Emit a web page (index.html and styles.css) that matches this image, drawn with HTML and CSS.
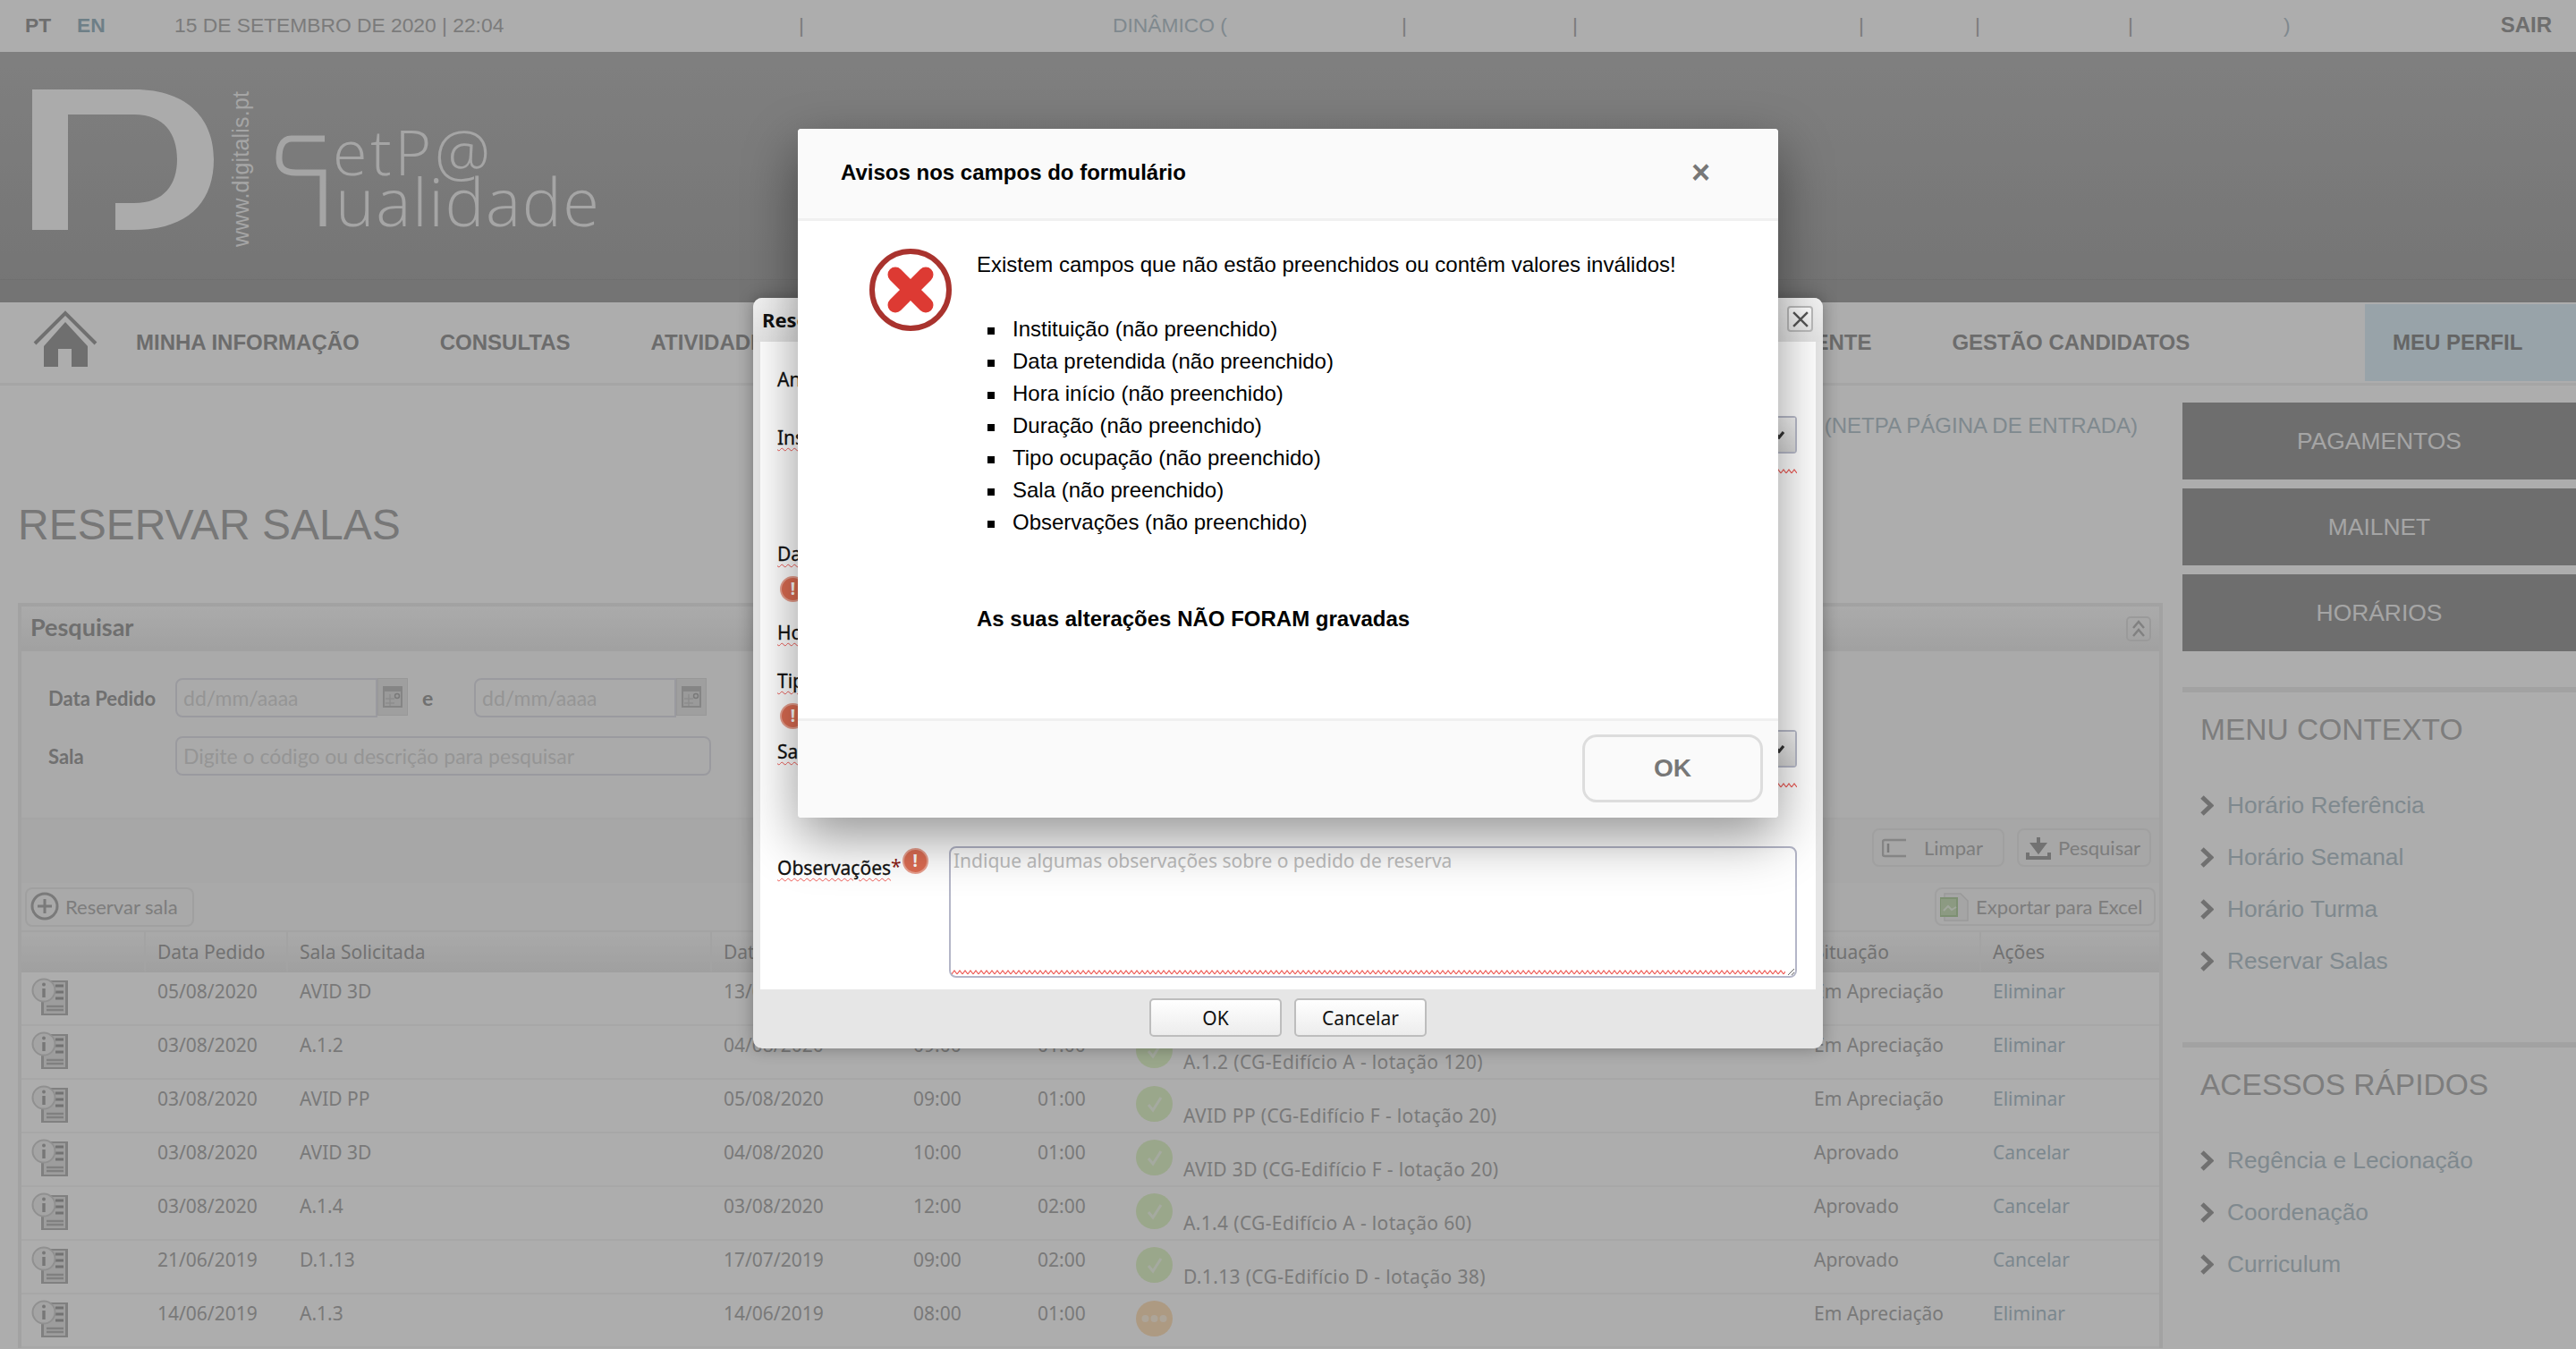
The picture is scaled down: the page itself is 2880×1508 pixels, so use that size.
FILE: index.html
```html
<!DOCTYPE html>
<html lang="pt">
<head>
    <meta charset="UTF-8">
    <meta name="viewport" content="width=device-width, initial-scale=1.0">
    <title>Reservar Salas</title>
    <link rel="stylesheet" href="styles.css">
</head>
<body>
    <!-- shared icons -->
    <svg class="icon-defs" aria-hidden="true">
        <defs>
            <symbol id="i-info" viewBox="0 0 41 42">
                <rect x="11" y="3" width="30" height="39" fill="#bdbdbd"/>
                <rect x="14" y="5" width="24" height="35" fill="#e8e8e8"/>
                <path d="M27 9h9M27 16h9M27 23h9" stroke="#a8a8a8" stroke-width="3"/>
                <path d="M17 32h19M17 36h19" stroke="#bdbdbd" stroke-width="2.5"/>
                <circle cx="14" cy="14" r="12.5" fill="#f2f2f2" stroke="#d4d4d4" stroke-width="2"/>
                <path d="M14 12v10" stroke="#b0b0b0" stroke-width="3.5"/>
                <circle cx="14" cy="7.5" r="2" fill="#b0b0b0"/>
            </symbol>
            <symbol id="i-check" viewBox="0 0 41 40">
                <ellipse cx="20.5" cy="20" rx="20.5" ry="20" fill="#e4f6cd"/>
                <path d="M14 21l5 6 9-14" fill="none" stroke="#f4fbec" stroke-width="3"/>
            </symbol>
            <symbol id="i-wait" viewBox="0 0 41 40">
                <ellipse cx="20.5" cy="20" rx="20.5" ry="20" fill="#ffe3c0"/>
                <circle cx="10.5" cy="20" r="4" fill="#fff3e2"/>
                <circle cx="20.5" cy="20" r="4" fill="#fff3e2"/>
                <circle cx="30.5" cy="20" r="4" fill="#fff3e2"/>
            </symbol>
            <symbol id="i-chev" viewBox="0 0 15 23">
                <path d="M2 2l10 9.5L2 21" fill="none" stroke="#a6a6a6" stroke-width="5"/>
            </symbol>
            <symbol id="i-cal" viewBox="0 0 22 24">
                <rect x="1" y="1" width="20" height="22" fill="#e4e4e4" stroke="#c4c4c4" stroke-width="2"/>
                <rect x="1" y="1" width="20" height="5" fill="#c4c4c4"/>
                <path d="M3 14h10M3 19h10M8 9v13" stroke="#cfcfcf" stroke-width="1.5"/>
                <circle cx="16" cy="11" r="2.5" fill="none" stroke="#b4b4b4" stroke-width="1.5"/>
            </symbol>
            <pattern id="wave" width="6" height="6" patternUnits="userSpaceOnUse">
                <path d="M0 5L3 1L6 5" fill="none" stroke="#ee5a55" stroke-width="1.2"/>
            </pattern>
        </defs>
    </svg>

    <div class="topbar">
        <a class="lang-on">PT</a>
        <a class="lang-off">EN</a>
        <span class="date">15 DE SETEMBRO DE 2020 | 22:04</span>
        <span class="sep">|</span>
        <span class="dyn">DINÂMICO (</span>
        <span class="sep">|</span>
        <span class="sep">|</span>
        <span class="sep">|</span>
        <span class="sep">|</span>
        <span class="sep">|</span>
        <span class="dyn">)</span>
        <a class="logout">SAIR</a>
    </div>

    <header class="banner">
        <svg class="logo" viewBox="0 58 700 280" width="700" height="280">
            <path class="logo-shape" d="M36 100H150C212 100 239 135 239 178C239 228 208 257 150 257H129V227H150C184 227 198 206 198 178C198 150 184 128 150 128H76V257H36Z"/>
            <text class="logo-url" transform="translate(278 276) rotate(-90)" textLength="174">www.digitalis.pt</text>
            <path class="logo-q" d="M363 155H326C314 155 312 168 312 177C312 188 318 193 331 193H361V253"/>
            <text class="logo-net" x="372" y="196" textLength="176">etP@</text>
            <text class="logo-qual" x="375" y="253" textLength="295">ualidade</text>
        </svg>
    </header>

    <nav class="mainnav">
        <a class="home">
            <svg viewBox="0 0 72 63" width="72" height="63">
                <path d="M2 37L36 3L70 37" fill="none" stroke="#a6a6a6" stroke-width="4"/>
                <path d="M12 40L36 13L61 40V63H43V43H28V63H12Z" fill="#a4a4a4"/>
            </svg>
        </a>
        <a>MINHA INFORMAÇÃO</a>
        <a>CONSULTAS</a>
        <a>ATIVIDADE</a>
        <a class="nav-docente">DOCENTE</a>
        <a>GESTÃO CANDIDATOS</a>
        <a class="profile">MEU PERFIL</a>
    </nav>

    <main class="layout">
        <section class="content">
            <p class="crumb">(NETPA PÁGINA DE ENTRADA)</p>
            <h1>RESERVAR SALAS</h1>

            <div class="panel">
                <div class="panel-head">
                    <span>Pesquisar</span>
                    <a class="collapse">
                        <svg viewBox="0 0 18 24" width="18" height="24"><path d="M3 11l6-7 6 7M3 20l6-7 6 7" fill="none" stroke="#bfbfbf" stroke-width="2.5"/></svg>
                    </a>
                </div>
                <form class="search-form">
                    <label>Data Pedido</label>
                    <div class="date-row">
                        <div class="date-field">
                            <input type="text" placeholder="dd/mm/aaaa">
                            <span class="cal"><svg width="22" height="24"><use href="#i-cal"/></svg></span>
                        </div>
                        <span class="and">e</span>
                        <div class="date-field">
                            <input type="text" placeholder="dd/mm/aaaa">
                            <span class="cal"><svg width="22" height="24"><use href="#i-cal"/></svg></span>
                        </div>
                    </div>
                    <label>Sala</label>
                    <input class="room-input" type="text" placeholder="Digite o código ou descrição para pesquisar">
                </form>
                <div class="search-actions">
                    <a class="tool-btn btn-clear">
                        <svg viewBox="0 0 28 22" width="28" height="22"><path d="M27 2H3a2 2 0 0 0-2 2v14a2 2 0 0 0 2 2h24" fill="none" stroke="#c4c4c4" stroke-width="2.5"/><path d="M7 6v10" stroke="#b4b4b4" stroke-width="2.5"/></svg>
                        Limpar
                    </a>
                    <a class="tool-btn btn-search">
                        <svg viewBox="0 0 28 26" width="28" height="26"><path d="M14 1v12M8 9h12l-6 8z" fill="#a8a8a8" stroke="#a8a8a8" stroke-width="4"/><path d="M2 18v6h24v-6" fill="none" stroke="#a8a8a8" stroke-width="4"/></svg>
                        Pesquisar
                    </a>
                </div>
                <div class="table-tools">
                    <a class="tool-btn btn-add">
                        <svg viewBox="0 0 32 32" width="32" height="32"><circle cx="16" cy="16" r="14" fill="none" stroke="#b4b4b4" stroke-width="3"/><path d="M16 8v16M8 16h16" stroke="#b4b4b4" stroke-width="3"/></svg>
                        Reservar sala
                    </a>
                    <a class="tool-btn btn-excel">
                        <svg viewBox="0 0 32 32" width="32" height="32"><path d="M5 1h18l8 8v22H5z" fill="#f4f4f4" stroke="#e2e2e2" stroke-width="1.5"/><rect x="0" y="6" width="19" height="20" fill="#cfe3c0" stroke="#b9d5a8" stroke-width="2"/><path d="M4 20l5-5 4 4 5-3" fill="none" stroke="#eef6e8" stroke-width="2"/></svg>
                        Exportar para Excel
                    </a>
                </div>
                <table class="results">
                    <colgroup>
                        <col class="c-icon"><col class="c-date"><col class="c-room"><col class="c-day">
                        <col class="c-hour"><col class="c-dur"><col class="c-desc"><col class="c-state"><col class="c-act">
                    </colgroup>
                    <thead>
                        <tr><th></th><th>Data Pedido</th><th>Sala Solicitada</th><th>Data</th><th>Hora</th><th>Duração</th><th>Sala</th><th>Situação</th><th>Ações</th></tr>
                    </thead>
                    <tbody>
                        <tr>
                            <td class="td-icon"><svg width="41" height="42"><use href="#i-info"/></svg></td>
                            <td>05/08/2020</td><td>AVID 3D</td><td>13/08/2020</td><td>09:00</td><td>01:00</td>
                            <td class="td-status"><div class="status"><svg width="41" height="40"><use href="#i-check"/></svg><span>AVID 3D (CG-Edifício F - lotação 20)</span></div></td>
                            <td>Em Apreciação</td><td><a>Eliminar</a></td>
                        </tr>
                        <tr>
                            <td class="td-icon"><svg width="41" height="42"><use href="#i-info"/></svg></td>
                            <td>03/08/2020</td><td>A.1.2</td><td>04/08/2020</td><td>09:00</td><td>01:00</td>
                            <td class="td-status"><div class="status"><svg width="41" height="40"><use href="#i-check"/></svg><span>A.1.2 (CG-Edifício A - lotação 120)</span></div></td>
                            <td>Em Apreciação</td><td><a>Eliminar</a></td>
                        </tr>
                        <tr>
                            <td class="td-icon"><svg width="41" height="42"><use href="#i-info"/></svg></td>
                            <td>03/08/2020</td><td>AVID PP</td><td>05/08/2020</td><td>09:00</td><td>01:00</td>
                            <td class="td-status"><div class="status"><svg width="41" height="40"><use href="#i-check"/></svg><span>AVID PP (CG-Edifício F - lotação 20)</span></div></td>
                            <td>Em Apreciação</td><td><a>Eliminar</a></td>
                        </tr>
                        <tr>
                            <td class="td-icon"><svg width="41" height="42"><use href="#i-info"/></svg></td>
                            <td>03/08/2020</td><td>AVID 3D</td><td>04/08/2020</td><td>10:00</td><td>01:00</td>
                            <td class="td-status"><div class="status"><svg width="41" height="40"><use href="#i-check"/></svg><span>AVID 3D (CG-Edifício F - lotação 20)</span></div></td>
                            <td>Aprovado</td><td><a>Cancelar</a></td>
                        </tr>
                        <tr>
                            <td class="td-icon"><svg width="41" height="42"><use href="#i-info"/></svg></td>
                            <td>03/08/2020</td><td>A.1.4</td><td>03/08/2020</td><td>12:00</td><td>02:00</td>
                            <td class="td-status"><div class="status"><svg width="41" height="40"><use href="#i-check"/></svg><span>A.1.4 (CG-Edifício A - lotação 60)</span></div></td>
                            <td>Aprovado</td><td><a>Cancelar</a></td>
                        </tr>
                        <tr>
                            <td class="td-icon"><svg width="41" height="42"><use href="#i-info"/></svg></td>
                            <td>21/06/2019</td><td>D.1.13</td><td>17/07/2019</td><td>09:00</td><td>02:00</td>
                            <td class="td-status"><div class="status"><svg width="41" height="40"><use href="#i-check"/></svg><span>D.1.13 (CG-Edifício D - lotação 38)</span></div></td>
                            <td>Aprovado</td><td><a>Cancelar</a></td>
                        </tr>
                        <tr>
                            <td class="td-icon"><svg width="41" height="42"><use href="#i-info"/></svg></td>
                            <td>14/06/2019</td><td>A.1.3</td><td>14/06/2019</td><td>08:00</td><td>01:00</td>
                            <td class="td-status"><div class="status"><svg width="41" height="40"><use href="#i-wait"/></svg></div></td>
                            <td>Em Apreciação</td><td><a>Eliminar</a></td>
                        </tr>
                    </tbody>
                </table>
            </div>
        </section>

        <aside class="sidebar">
            <a class="side-btn">PAGAMENTOS</a>
            <a class="side-btn">MAILNET</a>
            <a class="side-btn">HORÁRIOS</a>
            <div class="side-box side-box-first">
                <h2>MENU CONTEXTO</h2>
                <a><svg width="15" height="23"><use href="#i-chev"/></svg>Horário Referência</a>
                <a><svg width="15" height="23"><use href="#i-chev"/></svg>Horário Semanal</a>
                <a><svg width="15" height="23"><use href="#i-chev"/></svg>Horário Turma</a>
                <a><svg width="15" height="23"><use href="#i-chev"/></svg>Reservar Salas</a>
            </div>
            <div class="side-box">
                <h2>ACESSOS RÁPIDOS</h2>
                <a><svg width="15" height="23"><use href="#i-chev"/></svg>Regência e Lecionação</a>
                <a><svg width="15" height="23"><use href="#i-chev"/></svg>Coordenação</a>
                <a><svg width="15" height="23"><use href="#i-chev"/></svg>Curriculum</a>
            </div>
        </aside>
    </main>

    <div class="overlay"></div>

    <!-- reservation form dialog -->
    <div class="res-dialog">
        <div class="res-title">
            <span>Reservar sala</span>
            <a class="res-close">
                <svg viewBox="0 0 16 16" width="18" height="18"><path d="M1 1l14 14M15 1L1 15" stroke="#555" stroke-width="2.2"/></svg>
            </a>
        </div>
        <div class="res-body">
            <div class="res-row"><span class="res-label plain">Ano letivo</span></div>
            <div class="res-row">
                <span class="res-label">Instituição*</span>
                <div class="res-field">
                    <div class="fake-select"><span class="arrow"><svg viewBox="0 0 12 10" width="12" height="10"><path d="M1 2l5 6 5-6" fill="none" stroke="#333" stroke-width="3.2"/></svg></span></div>
                    <svg class="squiggle" width="100%" height="6"><rect width="100%" height="6" fill="url(#wave)"/></svg>
                </div>
            </div>
            <div class="res-row res-stack"><span class="res-label">Data pretendida*</span><span class="err">!</span></div>
            <div class="res-row"><span class="res-label">Hora início*</span></div>
            <div class="res-row res-stack"><span class="res-label">Tipo ocupação*</span><span class="err">!</span></div>
            <div class="res-row">
                <span class="res-label">Sala*</span>
                <div class="res-field">
                    <div class="fake-select"><span class="arrow"><svg viewBox="0 0 12 10" width="12" height="10"><path d="M1 2l5 6 5-6" fill="none" stroke="#333" stroke-width="3.2"/></svg></span></div>
                    <svg class="squiggle" width="100%" height="6"><rect width="100%" height="6" fill="url(#wave)"/></svg>
                </div>
            </div>
            <div class="res-row">
                <div class="obs-label"><span class="res-label">Observações</span><em>*</em><span class="err">!</span></div>
                <div class="obs-field">
                    <textarea placeholder="Indique algumas observações sobre o pedido de reserva"></textarea>
                    <svg class="obs-wave" width="100%" height="6"><rect width="100%" height="6" fill="url(#wave)"/></svg>
                </div>
            </div>
        </div>
        <div class="res-foot">
            <button type="button">OK</button>
            <button type="button">Cancelar</button>
        </div>
    </div>

    <!-- warning dialog -->
    <div class="warn-dialog">
        <div class="warn-head">
            <h3>Avisos nos campos do formulário</h3>
            <span class="warn-close">×</span>
        </div>
        <div class="warn-body">
            <svg class="warn-icon" viewBox="0 0 92 92" width="92" height="92">
                <circle cx="46" cy="46" r="43" fill="#fff" stroke="#a9332e" stroke-width="6"/>
                <path d="M29 29L63 63M63 29L29 63" stroke="#dd3a33" stroke-width="17" stroke-linecap="round"/>
            </svg>
            <div class="warn-text">
                <p>Existem campos que não estão preenchidos ou contêm valores inválidos!</p>
                <ul>
                    <li>Instituição (não preenchido)</li>
                    <li>Data pretendida (não preenchido)</li>
                    <li>Hora início (não preenchido)</li>
                    <li>Duração (não preenchido)</li>
                    <li>Tipo ocupação (não preenchido)</li>
                    <li>Sala (não preenchido)</li>
                    <li>Observações (não preenchido)</li>
                </ul>
                <p class="warn-strong">As suas alterações NÃO FORAM gravadas</p>
            </div>
        </div>
        <div class="warn-foot">
            <button type="button">OK</button>
        </div>
    </div>
</body>
</html>
```

FILE: styles.css
```css
* {
    box-sizing: border-box;
}
body {
    position: relative;
    margin: 0;
    width: 2880px;
    height: 1508px;
    overflow: hidden;
    background: #fff;
    font-family: "Liberation Sans", Arial, sans-serif;
}
a {
    text-decoration: none;
    color: inherit;
}
.icon-defs {
    position: absolute;
    width: 0;
    height: 0;
}

/* top bar */
.topbar {
    display: grid;
    grid-template-columns: 58px 109px 698px 351px 323px 191px 320px 130px 171px 174px 1fr auto;
    align-items: center;
    height: 58px;
    padding: 0 27px 2px 28px;
    font-size: 22.8px;
    color: #b6b6b6;
}
.lang-on {
    font-weight: bold;
    color: #a2a2a2;
}
.lang-off {
    font-weight: bold;
    color: #a3bcc8;
}
.dyn {
    color: #bccad2;
}
.logout {
    font-size: 24px;
    font-weight: bold;
    color: #a2a2a2;
}

/* banner */
.banner {
    height: 280px;
    background: linear-gradient(#bcbcbc, #acacac);
    box-shadow: inset 0 -25px 0 #ababab, inset 0 -26px 0 #a6a6a6;
}
.logo {
    display: block;
}
.logo-shape {
    fill: #fdfdfd;
}
.logo-url {
    font-family: "Liberation Sans", Arial, sans-serif;
    font-size: 25px;
    fill: #f4f4f4;
}
.logo-q {
    fill: none;
    stroke: #f4f4f4;
    stroke-width: 7;
}
.logo-net, .logo-qual {
    font-family: "Open Sans", sans-serif;
    font-weight: 300;
    fill: #f4f4f4;
}
.logo-net {
    font-size: 70px;
}
.logo-qual {
    font-size: 74px;
}

/* main navigation */
.mainnav {
    display: flex;
    align-items: center;
    gap: 90px;
    height: 93px;
    padding-left: 152px;
    border-bottom: 3px solid #f3f3f3;
    position: relative;
    font-size: 24px;
    font-weight: bold;
    color: #9f9f9f;
}
.home {
    display: flex;
    margin: -10px -47px 0 -115px;
}
.nav-docente {
    margin-left: 1030px;
}
.profile {
    display: flex;
    align-items: center;
    align-self: flex-start;
    margin: 2px 0 0 auto;
    width: 236px;
    height: 86px;
    padding-left: 31px;
    background: #e0f1f9;
    color: #969696;
}

/* page layout */
.layout {
    display: flex;
    gap: 22px;
}
.content {
    width: 2418px;
    padding: 30px 0 0 20px;
}
.crumb {
    margin: 0 28px 0 0;
    text-align: right;
    font-size: 24px;
    line-height: 30px;
    color: #bbcad2;
}
h1 {
    margin: 68px 0 59px;
    font-size: 48px;
    font-weight: normal;
    line-height: 56px;
    color: #b0b0b0;
}

/* search panel */
.panel {
    border: 4px solid #efefef;
    border-bottom: 0;
    font-family: Lato, sans-serif;
}
.panel-head {
    display: flex;
    align-items: center;
    justify-content: space-between;
    height: 50px;
    padding: 0 9px 5px 10px;
    background: linear-gradient(#fcfcfc, #ededed);
    font-size: 27px;
    font-weight: bold;
    color: #a4a4a4;
}
.collapse {
    display: flex;
    align-items: center;
    justify-content: center;
    width: 28px;
    height: 28px;
    margin-top: 5px;
    border: 2px solid #e4e4e4;
    border-radius: 5px;
}
.search-form {
    display: grid;
    grid-template-columns: 142px 1fr;
    row-gap: 21px;
    align-items: center;
    height: 188px;
    align-content: start;
    padding: 30px 0 0 30px;
    background: #fbfbfb;
    border-bottom: 2px solid #f3f3f3;
}
.search-form label {
    font-size: 22px;
    font-weight: bold;
    color: #a6a6a6;
}
.date-row {
    display: flex;
    align-items: center;
}
.date-field {
    display: flex;
    align-items: flex-start;
}
input, textarea {
    font-family: inherit;
    outline: none;
}
.search-form input {
    height: 44px;
    padding: 0 7px;
    border: 2px solid #e4e4ea;
    border-radius: 8px;
    background: #fbfbfb;
    font-size: 23px;
}
.search-form input::placeholder {
    color: #dcdcdc;
}
.date-field input {
    width: 226px;
    border-radius: 8px 0 0 8px;
}
.cal {
    display: flex;
    align-items: center;
    justify-content: center;
    width: 34px;
    height: 42px;
    background: #eaeaea;
    border: 1px solid #e0e0e0;
}
.and {
    width: 74px;
    padding-left: 16px;
    font-size: 23px;
    font-weight: bold;
    color: #a6a6a6;
}
.room-input {
    width: 599px;
}
.search-actions {
    display: flex;
    justify-content: flex-end;
    gap: 14px;
    height: 71px;
    padding: 10px 9px 0 0;
    background: #f6f6f6;
}
.tool-btn {
    display: flex;
    align-items: center;
    height: 43px;
    border: 2px solid #ececec;
    border-radius: 8px;
    font-family: Lato, sans-serif;
    font-size: 22px;
    color: #b8b8b8;
}
.btn-clear {
    width: 148px;
    padding-left: 9px;
    gap: 19px;
}
.btn-search {
    width: 150px;
    padding-left: 8px;
    gap: 8px;
}
.table-tools {
    display: flex;
    justify-content: space-between;
    height: 53px;
    padding: 5px 4px 0 4px;
    background: #f9f9f9;
}
.btn-add {
    width: 189px;
    padding: 0 0 2px 4px;
    gap: 7px;
    height: 44px;
}
.btn-excel {
    width: 247px;
    padding-left: 4px;
    gap: 8px;
}

/* results table */
.results {
    width: 2390px;
    table-layout: fixed;
    border-collapse: separate;
    border-spacing: 0;
    font-family: "Noto Sans", sans-serif;
    font-size: 21px;
    color: #b3b3b3;
}
.c-icon { width: 139px; }
.c-date { width: 159px; }
.c-room { width: 474px; }
.c-day { width: 212px; }
.c-hour { width: 139px; }
.c-dur { width: 111px; }
.c-desc { width: 757px; }
.c-state { width: 200px; }
.c-act { width: 199px; }
.results th {
    height: 47px;
    padding: 0 0 0 13px;
    background: linear-gradient(#fafafa, #ececec);
    border-top: 2px solid #f0f0f0;
    border-bottom: 2px solid #ececec;
    border-right: 2px solid #f0f0f0;
    text-align: left;
    font-weight: normal;
    color: #a8a8a8;
}
.results th:last-child {
    border-right: 0;
}
.results td {
    height: 60px;
    padding: 8px 0 0 13px;
    vertical-align: top;
    line-height: 26px;
    border-bottom: 2px solid #f6f6f6;
    white-space: nowrap;
}
.results td a {
    color: #b6c8d2;
}
.results .td-icon {
    padding: 6px 0 0 11px;
}
.td-icon svg {
    display: block;
}
.results .td-status {
    padding: 7px 0 0 12px;
}
.status {
    display: flex;
    align-items: flex-end;
    gap: 12px;
}
.status svg {
    flex-shrink: 0;
    margin-bottom: 6px;
}
.status span {
    letter-spacing: 0.35px;
}

/* sidebar */
.sidebar {
    display: flex;
    flex-direction: column;
    width: 440px;
    padding-top: 19px;
}
.side-btn {
    display: flex;
    align-items: center;
    justify-content: center;
    height: 86px;
    margin-bottom: 10px;
    background: #a2a2a2;
    font-size: 26.4px;
    color: #f4f4f4;
}
.side-box {
    display: flex;
    flex-direction: column;
    gap: 28px;
    height: 397px;
    padding: 22px 0 0 20px;
    border-top: 6px solid #efefef;
}
.side-box-first {
    margin-top: 30px;
}
.side-box h2 {
    margin: 0 0 21px;
    font-size: 33.5px;
    font-weight: normal;
    line-height: 40px;
    color: #b8b8b8;
}
.side-box a {
    display: flex;
    align-items: center;
    gap: 15px;
    height: 30px;
    font-size: 26.3px;
    color: #bbcad2;
}

/* overlay and dialogs */
.overlay {
    position: absolute;
    inset: 0;
    background: rgba(0, 0, 0, 0.32);
}
.res-dialog {
    position: absolute;
    left: 842px;
    top: 333px;
    width: 1196px;
    height: 839px;
    padding: 0 8px;
    background: #e6e6e6;
    border-radius: 10px;
    box-shadow: 0 0 18px rgba(0, 0, 0, 0.3);
    font-family: "Noto Sans", sans-serif;
    color: #111;
}
.res-title {
    display: flex;
    align-items: center;
    justify-content: space-between;
    height: 49px;
    margin: 0 -8px;
    padding: 0 11px 2px 10px;
    border-radius: 10px 10px 0 0;
    background: linear-gradient(#f3f3f3, #e4e4e4);
    font-size: 22px;
    font-weight: bold;
}
.res-close {
    display: flex;
    align-items: center;
    justify-content: center;
    width: 29px;
    height: 29px;
    border: 2px solid #bbb;
    border-radius: 4px;
    background: linear-gradient(#fff, #e8e8e8);
}
.res-body {
    display: grid;
    grid-template-rows: 55px 140px 78px 64px 69px 130px 147px;
    height: 724px;
    padding: 28px 21px 13px 19px;
    background: #fff;
}
.res-row {
    display: grid;
    grid-template-columns: 192px 948px;
    align-items: start;
}
.res-stack {
    display: block;
}
.res-label {
    display: block;
    padding-top: 10px;
    font-size: 21px;
    line-height: 28px;
    white-space: nowrap;
    -webkit-text-stroke: 0.3px #111;
    text-decoration: underline wavy #ee5a55 1px;
    text-underline-offset: 3px;
}
.res-label.plain {
    padding-top: 0;
    text-decoration: none;
}
.res-stack .res-label {
    padding-top: 0;
}
.err {
    display: flex;
    align-items: center;
    justify-content: center;
    width: 29px;
    height: 29px;
    border-radius: 50%;
    background: #dc6c52;
    border: 2px solid #e9a08f;
    color: #fff;
    font-size: 19px;
    font-weight: bold;
    line-height: 1;
}
.res-stack .err {
    margin: 11px 0 0 3px;
}
.fake-select {
    display: flex;
    justify-content: flex-end;
    height: 42px;
    border: 2px solid #b9bccb;
    border-radius: 4px;
    background: #fff;
}
.arrow {
    display: flex;
    align-items: center;
    justify-content: center;
    width: 36px;
    background: linear-gradient(#f4f4f4, #d9d9d9);
}
.squiggle {
    display: block;
    margin-top: 17px;
}
.obs-label {
    display: flex;
    align-items: flex-start;
}
.obs-label em {
    padding-top: 8px;
    font-size: 21px;
    font-style: normal;
    color: #8b1c14;
}
.obs-label .err {
    margin: 2px 0 0 1px;
}
.obs-field {
    position: relative;
    height: 147px;
}
.obs-field textarea {
    display: block;
    width: 100%;
    height: 100%;
    padding: 1px 3px;
    border: 2px solid #b4b6c8;
    border-radius: 8px;
    resize: both;
    font-size: 21px;
    line-height: 26px;
}
.obs-field textarea::placeholder {
    color: #bdbdbd;
}
.obs-wave {
    position: absolute;
    left: 3px;
    bottom: 3px;
    width: calc(100% - 16px);
}
.res-foot {
    display: flex;
    justify-content: center;
    gap: 14px;
    padding-top: 10px;
}
.res-foot button {
    width: 148px;
    height: 43px;
    border: 2px solid #bdbdbd;
    border-radius: 5px;
    background: linear-gradient(#fff, #ececec);
    font-family: "Noto Sans", sans-serif;
    font-size: 21px;
    color: #111;
}
.warn-dialog {
    position: absolute;
    left: 892px;
    top: 144px;
    width: 1096px;
    height: 770px;
    background: #fff;
    border-radius: 4px;
    box-shadow: 0 22px 60px rgba(0, 0, 0, 0.42);
    color: #000;
    font-size: 24px;
}
.warn-head {
    display: flex;
    align-items: center;
    justify-content: space-between;
    height: 103px;
    padding: 0 76px 3px 48px;
    background: #fafafa;
    border-bottom: 3px solid #f0f0f0;
    border-radius: 4px 4px 0 0;
}
.warn-head h3 {
    margin: 0;
    font-size: 24px;
}
.warn-close {
    font-size: 36px;
    font-weight: bold;
    line-height: 1;
    color: #777;
}
.warn-body {
    display: flex;
    height: 556px;
    padding: 31px 0 0 80px;
}
.warn-icon {
    flex-shrink: 0;
    margin-right: 28px;
}
.warn-text p {
    margin: 0;
    line-height: 36px;
}
.warn-text ul {
    margin: 36px 0 0;
    padding-left: 12px;
    list-style: none;
    line-height: 36px;
}
.warn-text li {
    display: flex;
    align-items: center;
    gap: 20px;
}
.warn-text li::before {
    content: "";
    width: 8px;
    height: 8px;
    margin-top: 4px;
    background: #000;
}
.warn-text .warn-strong {
    margin-top: 72px;
    font-weight: bold;
}
.warn-foot {
    display: flex;
    justify-content: flex-end;
    height: 111px;
    padding: 15px 17px 0 0;
    background: #fafafa;
    border-top: 3px solid #f0f0f0;
    border-radius: 0 0 4px 4px;
}
.warn-foot button {
    width: 202px;
    height: 76px;
    border: 3px solid #ddd;
    border-radius: 16px;
    background: #fafafa;
    font-family: "Liberation Sans", Arial, sans-serif;
    font-size: 28px;
    font-weight: bold;
    color: #777;
}
```
